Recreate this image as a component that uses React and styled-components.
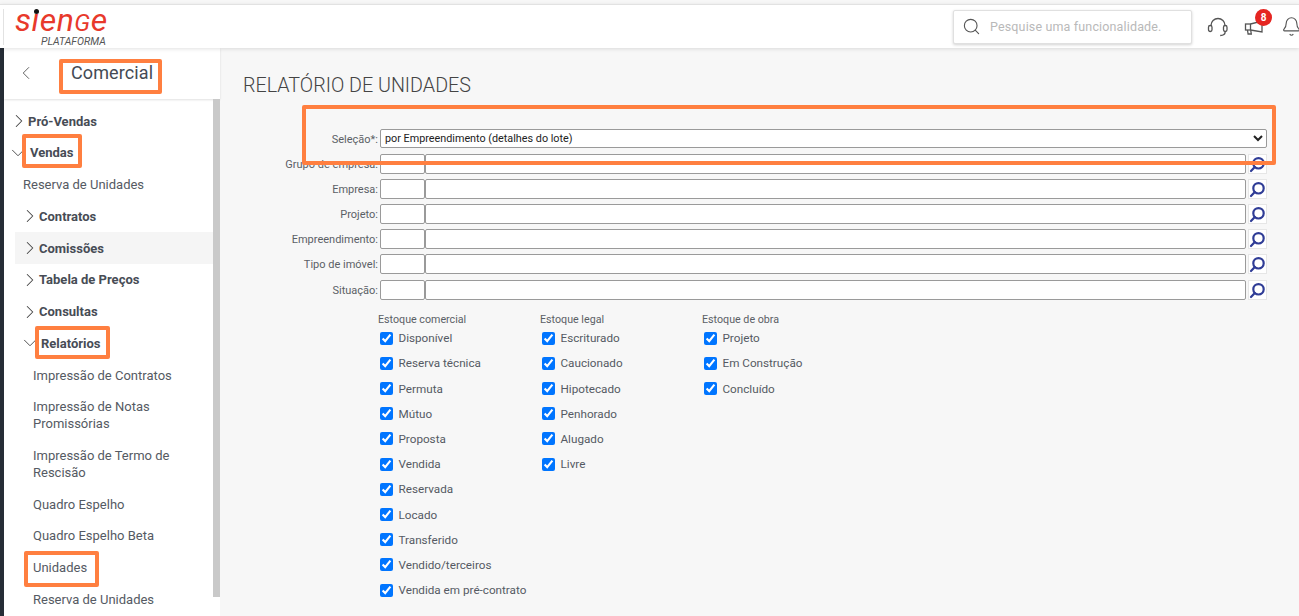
import React from "react";
import styled, { createGlobalStyle } from "styled-components";
import { Search, Bell, ChevronLeft, ChevronRight, ChevronDown } from "lucide-react";

const GlobalStyle = createGlobalStyle`
  html, body {
    margin: 0;
    height: 100%;
    overflow: hidden;
    background: #f7f7f7;
    font-family: Roboto, "Liberation Sans", sans-serif;
  }
`;

const menu = [
  { label: "Pró-Vendas", bold: true, icon: "right", indent: 10.5, gap: 5.5 },
  { label: "Vendas", bold: true, icon: "down", indent: 10, gap: 8 },
  { label: "Reserva de Unidades", indent: 19 },
  { label: "Contratos", bold: true, icon: "right", indent: 21.5, gap: 5.5 },
  { label: "Comissões", bold: true, icon: "right", indent: 21.5, gap: 5.5, active: true },
  { label: "Tabela de Preços", bold: true, icon: "right", indent: 21.5, gap: 5.5 },
  { label: "Consultas", bold: true, icon: "right", indent: 21.5, gap: 5.5 },
  { label: "Relatórios", bold: true, icon: "down", indent: 22, gap: 7 },
  { label: "Impressão de Contratos", indent: 29 },
  { label: "Impressão de Notas Promissórias", indent: 29 },
  { label: "Impressão de Termo de Rescisão", indent: 29 },
  { label: "Quadro Espelho", indent: 29 },
  { label: "Quadro Espelho Beta", indent: 29 },
  { label: "Unidades", indent: 29 },
  { label: "Reserva de Unidades", indent: 29 },
];

const fields = ["Grupo de empresa:", "Empresa:", "Projeto:", "Empreendimento:", "Tipo de imóvel:", "Situação:"];

const stockGroups = [
  {
    title: "Estoque comercial",
    items: ["Disponível", "Reserva técnica", "Permuta", "Mútuo", "Proposta", "Vendida", "Reservada", "Locado", "Transferido", "Vendido/terceiros", "Vendida em pré-contrato"],
  },
  {
    title: "Estoque legal",
    items: ["Escriturado", "Caucionado", "Hipotecado", "Penhorado", "Alugado", "Livre"],
  },
  {
    title: "Estoque de obra",
    items: ["Projeto", "Em Construção", "Concluído"],
  },
];

const highlights = [
  { left: 59, top: 59, width: 103, height: 35 },
  { left: 22, top: 134, width: 60, height: 34 },
  { left: 35, top: 326, width: 75, height: 33 },
  { left: 24, top: 551, width: 75, height: 36 },
  { left: 302, top: 105, width: 974, height: 60 },
];

const HeadsetIcon = () => (
  <svg width="21" height="21" viewBox="0 0 21 21" fill="none" stroke="currentColor" strokeWidth="1.3">
    <path d="M4 10V9.5a7 7 0 0 1 14 0V10" />
    <rect x="1.5" y="9.5" width="3.5" height="6" rx="1.7" />
    <rect x="16.5" y="9.5" width="3.5" height="6" rx="1.7" />
    <path d="M18.2 15.5c0 2.8-2 4-5 4" />
  </svg>
);

const BullhornIcon = () => (
  <svg width="21" height="21" viewBox="0 0 21 21" fill="none" stroke="currentColor" strokeWidth="1.3">
    <rect x="1.5" y="8" width="5" height="6" />
    <path d="M6.5 8L18 5v11L6.5 14" />
    <path d="M3.5 14l.6 4h3.2l-.6-3.8" />
  </svg>
);

const LookupIcon = () => (
  <svg width="19" height="20" viewBox="0 0 19 20" fill="none" stroke="#2f3c96" strokeWidth="2.2">
    <circle cx="10.5" cy="9.3" r="5.2" />
    <path d="M6.8 13L3 17" strokeLinecap="round" />
  </svg>
);

export default function App() {
  return (
    <Page>
      <GlobalStyle />
      <Header>
        <Logo>
          <LogoWord>sıen<LogoCap>G</LogoCap>e</LogoWord>
          <LogoDot />
          <LogoSub>PLATAFORMA</LogoSub>
        </Logo>
        <HeaderTools>
          <SearchBox>
            <Search size={19} strokeWidth={1.4} color="#555" />
            <SearchInput placeholder="Pesquise uma funcionalidade." />
          </SearchBox>
          <ToolIcon><HeadsetIcon /></ToolIcon>
          <ToolIcon>
            <BullhornIcon />
            <Badge>8</Badge>
          </ToolIcon>
          <ToolIcon><Bell size={21} strokeWidth={1.3} /></ToolIcon>
        </HeaderTools>
      </Header>

      <Body>
        <Sidebar>
          <SidebarHead>
            <ChevronLeft size={22} strokeWidth={1} color="#555" />
            <SidebarTitle>Comercial</SidebarTitle>
          </SidebarHead>
          <SidebarScroll>
            <Menu>
              {menu.map((item, i) => (
                <MenuItem key={i} $indent={item.indent} $gap={item.gap} $bold={item.bold} $active={item.active}>
                  {item.icon === "right" && <ChevronRight size={22} strokeWidth={1.1} />}
                  {item.icon === "down" && <ChevronDown size={22} strokeWidth={1} />}
                  <span>{item.label}</span>
                </MenuItem>
              ))}
            </Menu>
            <ScrollThumb />
          </SidebarScroll>
        </Sidebar>

        <Content>
          <Title>RELATÓRIO DE UNIDADES</Title>
          <Form>
            <FormRow>
              <FieldLabel>Seleção*:</FieldLabel>
              <SelectField defaultValue="lote">
                <option value="lote">por Empreendimento (detalhes do lote)</option>
              </SelectField>
            </FormRow>
            {fields.map((field) => (
              <FormRow key={field}>
                <FieldLabel>{field}</FieldLabel>
                <CodeInput />
                <NameInput />
                <LookupButton>
                  <LookupIcon />
                </LookupButton>
              </FormRow>
            ))}
          </Form>
          <StockColumns>
            {stockGroups.map((group) => (
              <StockColumn key={group.title}>
                <StockTitle>{group.title}</StockTitle>
                {group.items.map((item) => (
                  <StockItem key={item}>
                    <StockCheck type="checkbox" defaultChecked />
                    {item}
                  </StockItem>
                ))}
              </StockColumn>
            ))}
          </StockColumns>
        </Content>
      </Body>

      {highlights.map((box, i) => (
        <Highlight key={i} style={box} />
      ))}
    </Page>
  );
}

const Page = styled.div`
  position: relative;
  height: 616px;
  overflow: hidden;
  display: flex;
  flex-direction: column;
`;

const Header = styled.header`
  height: 43px;
  margin-top: 4px;
  background: #fff;
  border-top: 1px solid #e2e2e2;
  box-shadow: 0 1px 4px rgba(0, 0, 0, 0.12);
  display: flex;
  align-items: center;
  justify-content: space-between;
  position: relative;
  z-index: 2;
`;

const Logo = styled.div`
  position: relative;
  width: 110px;
  height: 36px;
  margin-left: 3px;
  border-left: 1px solid #e2e2e2;
`;

const LogoWord = styled.div`
  position: absolute;
  left: 11px;
  top: -4px;
  font: italic 400 32px/30px Roboto, sans-serif;
  letter-spacing: 0.5px;
  color: #e8392b;
`;

const LogoCap = styled.span`
  font-size: 24px;
`;

const LogoDot = styled.i`
  position: absolute;
  left: 30px;
  top: 0;
  width: 5px;
  height: 5px;
  border-radius: 50%;
  background: #111;
`;

const LogoSub = styled.div`
  position: absolute;
  left: 37px;
  top: 27px;
  font: italic 400 10.5px/11px Roboto, sans-serif;
  color: #555;
`;

const HeaderTools = styled.div`
  display: flex;
  align-items: center;
`;

const SearchBox = styled.div`
  width: 239px;
  height: 34px;
  box-sizing: border-box;
  margin-right: 15px;
  padding-left: 8px;
  background: #fff;
  border: 1px solid #e0e0e0;
  border-radius: 2px;
  box-shadow: 0 1px 3px rgba(0, 0, 0, 0.18);
  display: flex;
  align-items: center;
  gap: 9px;
`;

const SearchInput = styled.input`
  flex: 1;
  min-width: 0;
  border: 0;
  outline: 0;
  padding: 0;
  background: transparent;
  font: 400 12.5px Roboto, sans-serif;
  letter-spacing: 0.15px;
  &::placeholder {
    color: #b9b9b9;
    opacity: 1;
  }
`;

const ToolIcon = styled.div`
  position: relative;
  width: 21px;
  height: 21px;
  margin-right: 16px;
  color: #555;
  &:last-child {
    margin-right: -3px;
  }
`;

const Badge = styled.span`
  position: absolute;
  top: -7px;
  left: 11px;
  width: 17px;
  height: 17px;
  border-radius: 50%;
  background: #e52521;
  color: #fff;
  font: 700 10px/17px Roboto, sans-serif;
  text-align: center;
`;

const Body = styled.div`
  flex: 1;
  min-height: 0;
  display: flex;
`;

const Sidebar = styled.aside`
  width: 216px;
  flex: none;
  background: #fff;
  border-left: 4px solid #262d36;
  display: flex;
  flex-direction: column;
`;

const SidebarHead = styled.div`
  height: 51px;
  box-sizing: border-box;
  padding: 0 0 2px 11px;
  box-shadow: 0 1px 2px rgba(0, 0, 0, 0.12);
  display: flex;
  align-items: center;
  gap: 34px;
`;

const SidebarTitle = styled.div`
  font-size: 18px;
  letter-spacing: 0.1px;
  color: #444a54;
  padding-bottom: 1px;
`;

const SidebarScroll = styled.div`
  flex: 1;
  min-height: 0;
  display: flex;
`;

const Menu = styled.nav`
  flex: 1;
  min-width: 0;
  padding-top: 6.4px;
`;

const MenuItem = styled.div`
  box-sizing: border-box;
  padding: 7.36px 14px 7.36px ${(p) => p.$indent - (p.$active ? 11 : 0)}px;
  margin-left: ${(p) => (p.$active ? 11 : 0)}px;
  background: ${(p) => (p.$active ? "#f5f5f5" : "transparent")};
  display: flex;
  align-items: center;
  gap: ${(p) => p.$gap || 0}px;
  font-size: 13px;
  line-height: 17px;
  font-weight: ${(p) => (p.$bold ? 700 : 400)};
  color: ${(p) => (p.$bold ? "#474c55" : "#555a63")};
  svg {
    flex: none;
    margin: -4px -7px;
    color: #444;
  }
`;

const ScrollThumb = styled.div`
  width: 7px;
  height: 498px;
  flex: none;
  background: #c9c9c9;
`;

const Content = styled.main`
  flex: 1;
  min-width: 0;
  padding: 27px 0 0 23px;
`;

const Title = styled.h1`
  margin: 0;
  font-size: 19.7px;
  line-height: 22px;
  font-weight: 300;
  color: #444;
`;

const Form = styled.div`
  margin-top: 31px;
  width: 1024px;
  display: flex;
  flex-direction: column;
  gap: 4.2px;
`;

const FormRow = styled.div`
  height: 21px;
  display: flex;
  align-items: center;
`;

const FieldLabel = styled.label`
  width: 135px;
  margin-right: 2px;
  padding-top: 1px;
  flex: none;
  text-align: right;
  font-size: 11px;
  color: #5b5f66;
  white-space: nowrap;
`;

const SelectField = styled.select`
  width: 887px;
  height: 19px;
  padding: 0;
  box-sizing: border-box;
  background: #fff;
  border: 1px solid #9a9a9a;
  border-radius: 2px;
  font: 400 10.8px Roboto, sans-serif;
  color: #222;
`;

const CodeInput = styled.input`
  width: 45px;
  height: 20px;
  box-sizing: border-box;
  padding: 0;
  background: #fff;
  border: 1px solid #9a9a9a;
  border-radius: 2px;
`;

const NameInput = styled(CodeInput)`
  width: 821px;
`;

const LookupButton = styled.div`
  width: 19px;
  height: 20px;
  margin-left: 2px;
  background: #fff;
  box-shadow: inset 0 0 0 1px #e6e6e6;
  display: flex;
`;

const StockColumns = styled.div`
  margin: 12.5px 0 0 135px;
  display: flex;
`;

const StockColumn = styled.div`
  width: 162px;
  display: flex;
  flex-direction: column;
`;

const StockTitle = styled.div`
  font-size: 10.7px;
  line-height: 13px;
  color: #5b5f66;
`;

const StockItem = styled.label`
  height: 25.2px;
  padding-left: 2px;
  display: flex;
  align-items: center;
  gap: 5.5px;
  font-size: 11.7px;
  color: #555a63;
`;

const StockCheck = styled.input`
  width: 13px;
  height: 13px;
  margin: 0;
`;

const Highlight = styled.div`
  position: absolute;
  box-sizing: border-box;
  border: 4px solid #ff7f40;
  border-radius: 2px;
  pointer-events: none;
  z-index: 5;
`;
